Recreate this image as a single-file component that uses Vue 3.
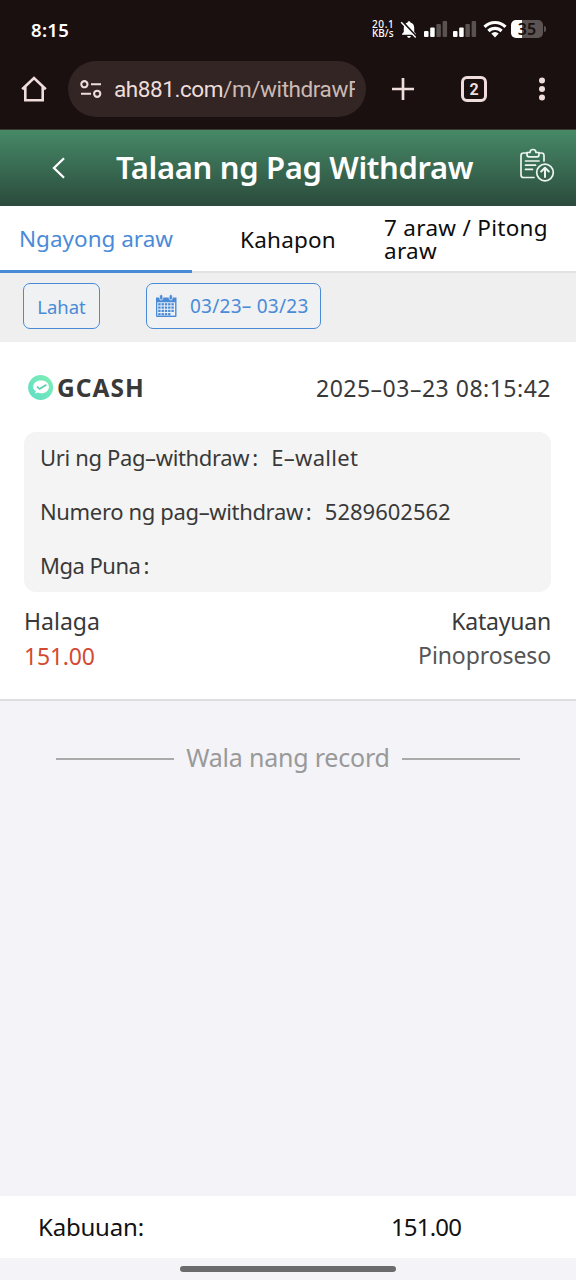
<script setup>
const tabs = [
  { label: 'Ngayong araw', cls: 'today', active: true },
  { label: 'Kahapon', cls: 'yesterday' },
  { label: '7 araw / Pitong araw', cls: 'week' },
]
const details = [
  { label: 'Uri ng Pag–withdraw', value: 'E–wallet', cls: 'kind' },
  { label: 'Numero ng pag–withdraw', value: '5289602562', cls: 'number' },
  { label: 'Mga Puna', value: '', cls: 'note' },
]
const dots = []
for (let r = 0; r < 4; r++) for (let c = 0; c < 5; c++) if (!(r === 3 && c === 4)) dots.push({ x: 3.2 + c * 3.3, y: 9.2 + r * 3.3 })
</script>

<template>
  <div class="screen">
    <div class="status">
      <span class="clock">8:15</span>
      <div class="indicators">
        <div class="speed"><span>20.1</span><span>KB/s</span></div>
        <svg class="bell" width="18" height="19" viewBox="0 0 18 19">
          <path d="M9 1.200c.9 0 1.400.6 1.400 1.400 2.500.6 3.800 2.600 3.800 5.200v4.200l1.800 2v.8H2V14l1.800-2V7.800c0-2.600 1.300-4.600 3.800-5.200C7.600 1.800 8.100 1.200 9 1.200zM7.200 15.900h3.600c0 1-.8 1.800-1.800 1.800s-1.800-.8-1.800-1.800z" fill="#fff" />
          <path d="M2.200 1.600l14 15" stroke="#1a100f" stroke-width="2.200" />
          <path d="M1.200 2.200l14.500 15.400" stroke="#fff" stroke-width="1.400" />
        </svg>
        <svg v-for="n in 2" :key="n" class="signal" width="24" height="18" viewBox="0 0 24 18">
          <rect x="0" y="11" width="4.500" height="6" rx="1" fill="#fff" />
          <rect x="6.200" y="7.500" width="4.500" height="9.500" rx="1" fill="#fff" />
          <rect x="12.400" y="4" width="4.500" height="13" rx="1" fill="#5a5251" />
          <rect x="18.600" y="1" width="4.500" height="16" rx="1" fill="#5a5251" />
        </svg>
        <svg class="wifi" width="24" height="18" viewBox="0 0 24 18" fill="none" stroke="#fff" stroke-width="3.200">
          <path d="M1.500 6.800a15 15 0 0 1 21 0" />
          <path d="M5.400 11a9.500 9.500 0 0 1 13.200 0" />
          <path d="M12 17.500l-3.700-4a5.300 5.300 0 0 1 7.400 0z" fill="#fff" stroke="none" />
        </svg>
        <div class="battery"><span>35</span></div>
        <i class="nub"></i>
      </div>
    </div>

    <div class="browser">
      <svg class="home" width="26" height="27" viewBox="0 0 26 27" fill="none" stroke="#eeddda" stroke-width="2.600">
        <path d="M1.200 13.200L13 2l11.800 11.200M4.300 11v13.300h17.400V11" stroke-linejoin="miter" />
      </svg>
      <div class="address">
        <svg width="22" height="18" viewBox="0 0 22 18" fill="none" stroke="#eeddda" stroke-width="2.100">
          <circle cx="4.400" cy="4.200" r="3.100" /><path d="M11 4.200h10M1 13.800h10" /><circle cx="17.200" cy="13.800" r="3.100" />
        </svg>
        <div class="url">ah881.com<span>/m/withdrawF</span></div>
      </div>
      <svg class="plus" width="24" height="24" viewBox="0 0 24 24" stroke="#eeddda" stroke-width="2.700"><path d="M1 12h22M12 1v22" /></svg>
      <div class="tabcount">2</div>
      <svg class="more" width="8" height="24" viewBox="0 0 8 24" fill="#eeddda"><circle cx="4" cy="3.500" r="3" /><circle cx="4" cy="12" r="3" /><circle cx="4" cy="20.400" r="3" /></svg>
    </div>

    <header class="header">
      <svg class="back" width="14" height="22" viewBox="0 0 14 22" fill="none" stroke="#fff" stroke-width="2.300"><path d="M12 1.200L2 11l10 9.800" /></svg>
      <h1>Talaan ng Pag Withdraw</h1>
      <svg class="report" width="36" height="36" viewBox="0 0 36 36" fill="none" stroke="#eef5f0" stroke-width="1.700" stroke-linecap="round" stroke-linejoin="round">
        <path d="M8 5H4.500Q2 5 2 7.500V27q0 2.500 2.500 2.500H15M20 5h2.500Q25 5 25 7.500V13" />
        <path d="M8 4.500h3c0-4 6-4 6 0h3v2.300q0 2-2 2h-8q-2 0-2-2z" />
        <path d="M6.500 13h13.500M6.500 17.200h10M6.500 21.400h7" />
        <circle cx="26" cy="24.500" r="8.300" /><path d="M26 29v-9M22.200 23.500L26 19.700l3.800 3.800" stroke-width="2" />
      </svg>
    </header>

    <nav class="tabs">
      <div v-for="t in tabs" :key="t.label" class="tab" :class="[t.cls, { active: t.active }]"><span>{{ t.label }}</span></div>
    </nav>

    <div class="filters">
      <div class="chip all">Lahat</div>
      <div class="chip range">
        <svg width="22" height="24" viewBox="0 0 22 24">
          <path d="M1 3.500h20.500V22q0 1-1 1H2q-1 0-1-1z" fill="#4a8bd8" />
          <rect x="2.300" y="8.300" width="17.800" height="13.300" fill="#eef1f6" />
          <rect v-for="(d, i) in dots" :key="i" :x="d.x" :y="d.y" width="2.400" height="2.200" fill="#4a8bd8" />
          <g fill="#4a8bd8" stroke="#efefef" stroke-width=".8"><rect x="4.600" y=".5" width="3.200" height="5.500" rx="1.600" /><rect x="14.200" y=".5" width="3.200" height="5.500" rx="1.600" /></g>
        </svg>
        <span>03/23– 03/23</span>
      </div>
    </div>

    <section class="record">
      <div class="record-head">
        <svg width="26" height="26" viewBox="0 0 26 26">
          <defs><linearGradient id="mint" x1="0" y1="1" x2="1" y2="0"><stop offset="0" stop-color="#5fdcc6" /><stop offset="1" stop-color="#7ff0b4" /></linearGradient></defs>
          <circle cx="12.600" cy="13.500" r="12.500" fill="url(#mint)" />
          <path d="M13 6.600c4.700 0 7.900 2.700 7.900 6.300s-3.200 6.300-7.700 6.300c-1.200 0-2.300-.2-3.300-.6l-2.600.8.500-2.300c-1.700-1.100-2.600-2.500-2.600-4.200 0-3.600 3.200-6.300 7.800-6.300z" fill="#fff" />
          <path d="M9 12.600l2.600 2.400 6.800-4.300" fill="none" stroke="#55cfae" stroke-width="1.600" />
        </svg>
        <b>GCASH</b>
        <time>2025–03–23 08:15:42</time>
      </div>
      <div class="details">
        <div v-for="d in details" :key="d.label" class="detail" :class="d.cls">
          <span class="label">{{ d.label }}</span><span class="colon">:</span><span class="value">{{ d.value }}</span>
        </div>
      </div>
      <div class="summary"><span>Halaga</span><span class="status-label">Katayuan</span></div>
      <div class="summary second"><span class="amount">151.00</span><span class="state">Pinoproseso</span></div>
    </section>

    <div class="end"><i></i><span>Wala nang record</span><i></i></div>

    <footer class="total"><span>Kabuuan:</span><span class="sum">151.00</span></footer>
    <div class="gesture"><i></i></div>
  </div>
</template>

<style>
body { background: #f3f3f8; }
</style>

<style scoped>
* { box-sizing: border-box; }
.screen { width: 576px; height: 1280px; display: flex; flex-direction: column; overflow: hidden; background: #f3f3f8; font-family: "Noto Sans", "Open Sans", sans-serif; color: #393939; white-space: nowrap; }
.screen > * { flex: none; }
svg { display: block; flex: none; }

.status { height: 58px; background: #1a100f; display: flex; justify-content: space-between; padding: 0 30px 0 31px; color: #fff; }
.clock { font-size: 18.5px; font-weight: 600; line-height: 59px; letter-spacing: .3px; }
.indicators { display: flex; align-items: center; height: 58px; }
.speed { width: 24px; display: flex; flex-direction: column; font-size: 10px; font-weight: 500; line-height: 9px; margin-right: 4px; }
.speed span:first-child { letter-spacing: .6px; }
.bell { margin-right: 6px; }
.signal { margin-right: 5px; }
.wifi { margin: 0 4px 0 1px; }
.battery { width: 32px; height: 18px; border-radius: 5px; background: linear-gradient(90deg, #fff 0 11px, #5c5453 11px); text-align: center; }
.battery span { display: block; font-size: 16px; line-height: 18px; font-weight: 600; color: #1a100f; }
.nub { width: 2px; height: 6px; margin-left: 1px; border-radius: 0 2px 2px 0; background: #5c5453; }

.browser { height: 72px; background: #1a100f; display: flex; align-items: center; padding: 0 30px 9px 21px; border-bottom: 1px solid #3a3a30; }
.home { margin-top: 1px; }
.address { width: 298px; height: 56px; margin-left: 21px; border-radius: 28px; background: #322524; display: flex; align-items: center; padding-left: 12px; }
.url { width: 241px; margin-left: 12px; overflow: hidden; font-family: Roboto, sans-serif; font-size: 22.5px; line-height: 30px; letter-spacing: -.42px; color: #eeddda; }
.url span { color: #cdbab4; }
.plus { margin-left: 25px; }
.tabcount { width: 26px; height: 26px; margin-left: 46px; border: 3px solid #eeddda; border-radius: 6px; color: #eeddda; font: 700 16px/21px Roboto, sans-serif; text-align: center; }
.more { margin-left: auto; }

.header { height: 76px; display: flex; align-items: center; padding: 0 21px 0 52px; background: linear-gradient(#468967, #2b4b3c); color: #fff; }
h1 { margin: 0 0 0 50px; font-size: 31px; font-weight: 600; line-height: 75px; letter-spacing: -.35px; height: 76px; }
.report { margin: -4px 0 0 auto; }

.tabs { height: 67px; display: grid; grid-template-columns: repeat(3, 192px); background: #fff; color: #0d0d0d; font-size: 22.5px; line-height: 23px; }
.tab { display: flex; align-items: center; justify-content: center; border-bottom: 2px solid #e2e2e2; }
.active { color: #4a8bd8; border-bottom: 3px solid #4a8bd8; padding-top: 1px; }
.yesterday { letter-spacing: .2px; padding-top: 1px; }
.week { white-space: normal; justify-content: flex-start; letter-spacing: .3px; }
.week span { width: 175px; }

.filters { height: 69px; background: #efefef; display: flex; padding: 10px 23px 0; color: #4a8bd8; font-size: 18.5px; }
.chip { height: 46px; border: 1.500px solid #4a8bd8; border-radius: 7px; display: flex; align-items: center; background: #f0f1f3; }
.all { width: 77px; justify-content: center; padding-top: 1px; }
.range { width: 175px; margin-left: 46px; padding-left: 8px; font-size: 19px; letter-spacing: .25px; }
.range span { margin-left: 13px; }

.record { height: 359px; background: #fff; border-bottom: 2px solid #dedee1; padding: 0 25px 0 24px; }
.record-head { height: 90px; display: flex; align-items: center; padding-left: 4px; }
.record-head b { margin: 1px 0 0 3px; font-size: 24.5px; letter-spacing: 1px; line-height: 34px; }
time { margin: 1px 0 0 auto; font-size: 23px; letter-spacing: .5px; }
.details { height: 160px; background: #f4f4f4; border-radius: 12px; padding-left: 16px; }
.detail { height: 54px; line-height: 51px; font-size: 22px; display: flex; }
.label { letter-spacing: -.35px; }
.note .label { letter-spacing: -.5px; }
.colon { width: 22px; padding-left: 3px; }
.kind .value { letter-spacing: .3px; }
.summary { display: flex; justify-content: space-between; font-size: 23px; line-height: 34px; height: 34px; margin-top: 12px; }
.status-label { letter-spacing: -.2px; }
.second { margin-top: 1px; line-height: 33px; }
.amount { color: #d34a32; line-height: 35px; letter-spacing: -.2px; }
.state { color: #555; letter-spacing: -.1px; }

.end { height: 40px; margin-top: 38px; display: flex; align-items: center; justify-content: center; gap: 12px; font-size: 25px; color: #999; letter-spacing: -.2px; line-height: 37px; }
.end span { height: 40px; }
.end i { width: 118px; height: 2px; background: #aaa; }

.total { height: 62px; margin-top: auto; background: #fff; color: #111; display: flex; padding-left: 38px; font-size: 24px; line-height: 61px; }
.total span:first-child { letter-spacing: -.2px; }
.sum { margin-left: 247px; letter-spacing: -.8px; }
.gesture { height: 22px; display: flex; justify-content: center; padding-top: 8px; }
.gesture i { width: 216px; height: 6px; border-radius: 3px; background: #6b6b6d; }
</style>
